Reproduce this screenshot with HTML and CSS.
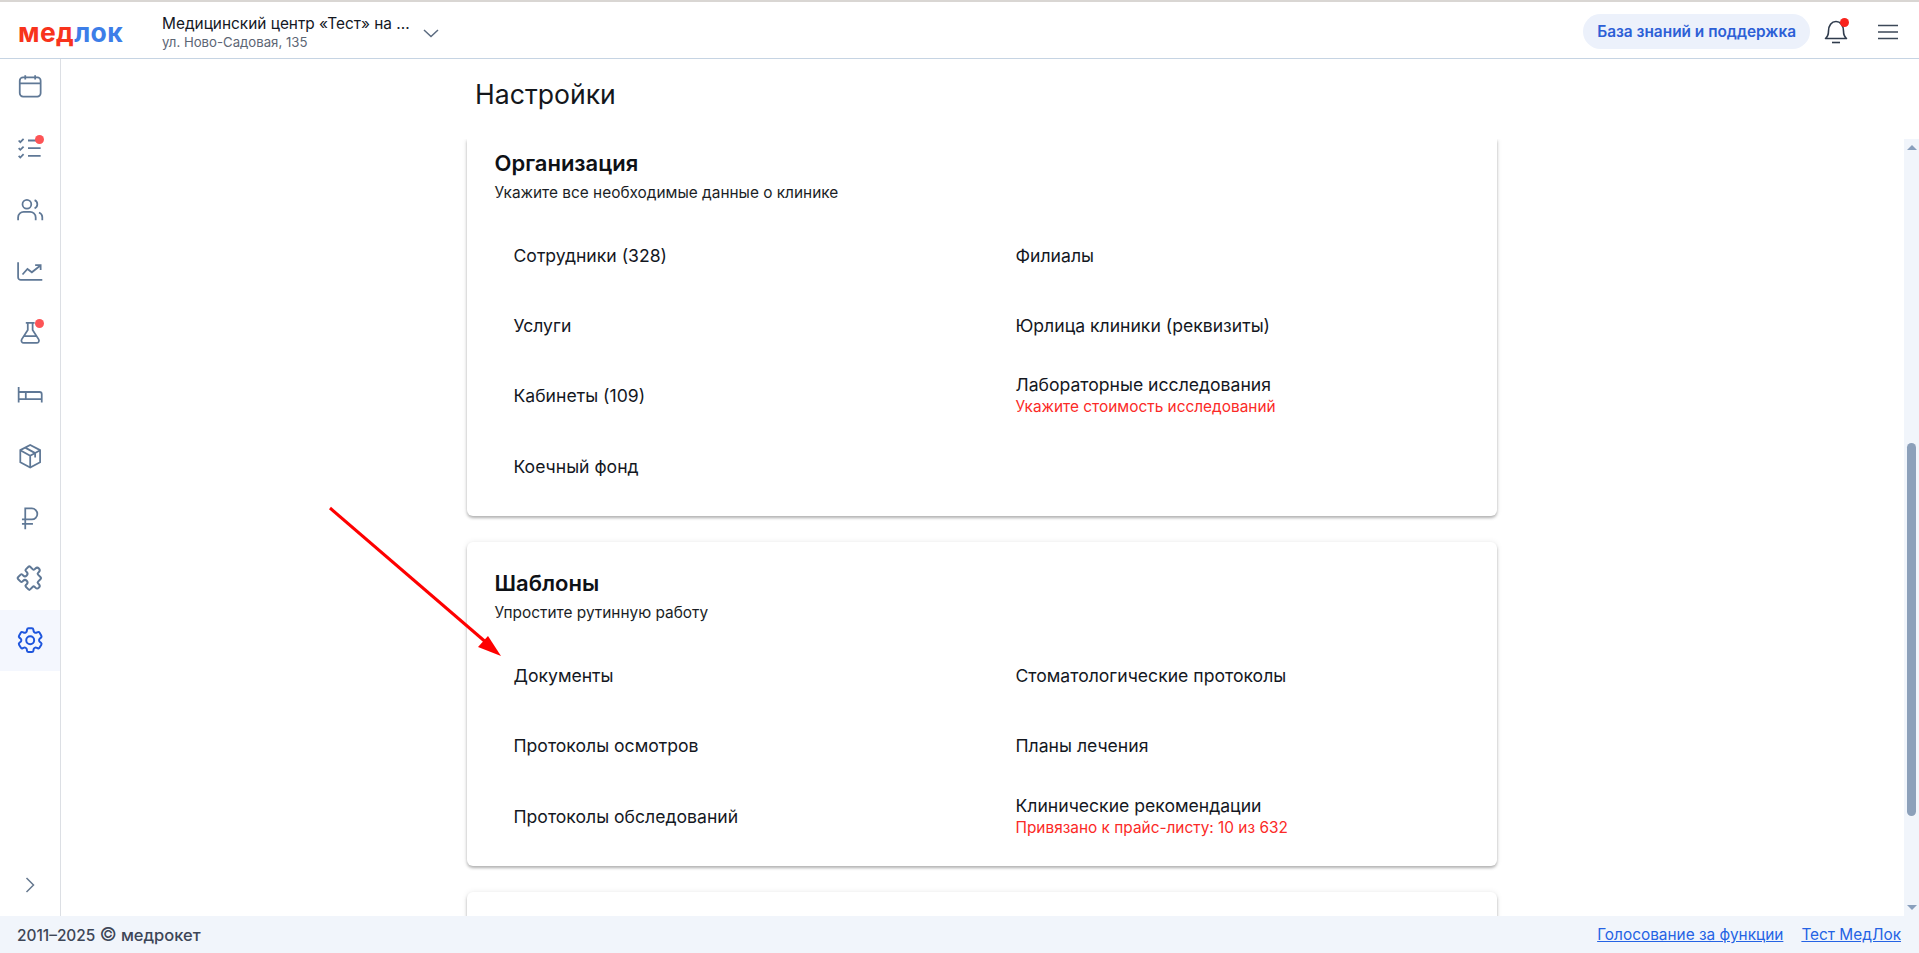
FILE: index.html
```html
<!DOCTYPE html>
<html lang="ru">
<head>
<meta charset="utf-8">
<title>Настройки</title>
<link rel="stylesheet" href="styles.css">
</head>
<body>
<div class="app">
  <header class="topbar">
    <div class="logo"><span class="logo-red">мед</span><span class="logo-blue">лок</span></div>
    <div class="clinic">
      <div class="clinic-text">
        <div class="clinic-name">Медицинский центр «Тест» на ...</div>
        <div class="clinic-addr">ул. Ново-Садовая, 135</div>
      </div>
      <svg class="clinic-chevron" width="18" height="10" viewBox="0 0 18 10"><path d="M2 2l7 6.5L16 2" fill="none" stroke="#5b6b80" stroke-width="1.5"/></svg>
    </div>
    <div class="top-actions">
      <a class="help-pill">База знаний и поддержка</a>
      <span class="bell">
        <svg width="24" height="28" viewBox="0 0 24 28"><path d="M1.500 20.500c2.200-1.800 3-3.600 3-7.500 0-5.500 3-9.500 7.500-9.500s7.500 4 7.500 9.500c0 3.900.8 5.700 3 7.500z" fill="none" stroke="#2f3b4c" stroke-width="1.600" stroke-linejoin="round"/><path d="M8 24.500h8" stroke="#2f3b4c" stroke-width="1.600"/></svg>
        <i class="bell-dot"></i>
      </span>
      <svg class="burger" width="20" height="16" viewBox="0 0 20 16"><path d="M0 1.500h20M0 8h20M0 14.500h20" stroke="#3c4858" stroke-width="1.700"/></svg>
    </div>
  </header>

  <div class="middle">
    <nav class="sidebar">
      <div class="nav-list">
        <a class="nav-item"><svg class="ico" viewBox="0 0 24 24"><rect x="2.500" y="4" width="19" height="17.500" rx="3"/><path d="M2.500 9.500h19M7.500 2v4M16.500 2v4"/></svg></a>
        <a class="nav-item"><svg class="ico" viewBox="0 0 24 24"><path d="M1.500 5l1.500 1.500L6 3.500M1.500 12l1.500 1.500L6 10.500M1.500 19l1.500 1.500L6 17.500M10 5h11.500M10 12h11.500M10 19h11.500"/></svg><i class="nav-dot"></i></a>
        <a class="nav-item"><svg class="ico" viewBox="0 0 24 24"><circle cx="9" cy="7.500" r="4"/><path d="M1 22v-2.500c0-3 2.500-5 5-5h6c2.500 0 5 2 5 5V22M16 3.800a4 4 0 0 1 0 7.400M20 15c1.800.8 3 2.300 3 4.200V22"/></svg></a>
        <a class="nav-item"><svg class="ico" viewBox="0 0 24 24"><path d="M1 3.800V17.500a2.500 2.500 0 0 0 2.500 2.500H23M5 15l4.500-5 4 3 7.500-6M16.500 6.500h5V11"/></svg></a>
        <a class="nav-item"><svg class="ico" viewBox="0 0 24 24"><path d="M8 3.500h8M9.800 3.500v6.500L4.300 18.500c-.9 1.700.2 3.300 1.900 3.300h11.600c1.700 0 2.800-1.600 1.900-3.300L14.200 10V3.500M6.700 15.500h10.600"/></svg><i class="nav-dot"></i></a>
        <a class="nav-item"><svg class="ico" viewBox="0 0 24 24"><path d="M1.500 5.500v14M1.500 16.500h21v3M22.500 16.500V12a2 2 0 0 0-2-2h-19M8 10v6.500"/></svg></a>
        <a class="nav-item"><svg class="ico" viewBox="0 0 24 24"><path d="M12 1.800l9 4.700v11L12 22.200 3 17.500v-11zM3 6.500l9 5 9-5M12 11.500v10.700M7.500 4.200l9 5v4"/></svg></a>
        <a class="nav-item"><svg class="ico" viewBox="0 0 24 24"><path d="M7.500 23V4h6a5 5 0 0 1 0 10H4.500M4.500 18h10"/></svg></a>
        <a class="nav-item"><svg class="ico" viewBox="0 0 24 24"><g transform="translate(12 11) rotate(45) scale(1.120) translate(-10.500 -13.500)"><path d="M4 7h3a1 1 0 0 0 1-1V5a2 2 0 0 1 4 0v1a1 1 0 0 0 1 1h3a1 1 0 0 1 1 1v3a1 1 0 0 0 1 1h1a2 2 0 0 1 0 4h-1a1 1 0 0 0-1 1v3a1 1 0 0 1-1 1h-3a1 1 0 0 1-1-1v-1a2 2 0 0 0-4 0v1a1 1 0 0 1-1 1H4a1 1 0 0 1-1-1v-3a1 1 0 0 1 1-1h1a2 2 0 0 0 0-4H4a1 1 0 0 1-1-1V8a1 1 0 0 1 1-1"/></g></svg></a>
        <a class="nav-item is-active"><svg class="ico" viewBox="2 2 20 20"><path d="M9.594 3.940c.09-.542.56-.94 1.110-.94h2.593c.55 0 1.020.398 1.110.94l.213 1.281c.063.374.313.686.645.87.074.04.147.083.22.127.325.196.72.257 1.075.124l1.217-.456a1.125 1.125 0 0 1 1.370.49l1.296 2.247a1.125 1.125 0 0 1-.26 1.431l-1.003.827c-.293.241-.438.613-.43.992a7.723 7.723 0 0 1 0 .255c-.008.378.137.75.43.991l1.004.827c.424.35.534.955.26 1.430l-1.298 2.247a1.125 1.125 0 0 1-1.369.491l-1.217-.456c-.355-.133-.75-.072-1.076.124a6.470 6.470 0 0 1-.22.128c-.331.183-.581.495-.644.869l-.213 1.281c-.09.543-.56.94-1.110.94h-2.594c-.55 0-1.019-.398-1.110-.94l-.213-1.281c-.062-.374-.312-.686-.644-.87a6.520 6.520 0 0 1-.22-.127c-.325-.196-.72-.257-1.076-.124l-1.217.456a1.125 1.125 0 0 1-1.369-.49l-1.297-2.247a1.125 1.125 0 0 1 .26-1.431l1.004-.827c.292-.24.437-.613.43-.991a6.932 6.932 0 0 1 0-.255c.007-.38-.138-.751-.43-.992l-1.004-.827a1.125 1.125 0 0 1-.26-1.430l1.297-2.247a1.125 1.125 0 0 1 1.370-.491l1.216.456c.356.133.751.072 1.076-.124.072-.044.146-.086.22-.128.332-.183.582-.495.644-.869l.214-1.280Z"/><circle cx="12" cy="12" r="3"/></svg></a>
      </div>
      <a class="nav-item nav-expand"><svg width="12" height="18" viewBox="0 0 12 18"><path d="M2.500 2l7 7-7 7" fill="none" stroke="#66788f" stroke-width="1.500"/></svg></a>
    </nav>

    <main class="content">
      <div class="title-row"><h1 class="page-title">Настройки</h1></div>
      <div class="scroll-row">
        <div class="scroll-area">
          <div class="cards">
            <section class="card card-cut">
              <h2 class="card-title">Организация</h2>
              <p class="card-sub">Укажите все необходимые данные о клинике</p>
              <div class="links">
                <a class="link"><span>Сотрудники (328)</span></a>
                <a class="link"><span>Филиалы</span></a>
                <a class="link"><span>Услуги</span></a>
                <a class="link"><span>Юрлица клиники (реквизиты)</span></a>
                <a class="link"><span>Кабинеты (109)</span></a>
                <a class="link"><span>Лабораторные исследования</span><small class="warn">Укажите стоимость исследований</small></a>
                <a class="link"><span>Коечный фонд</span></a>
              </div>
            </section>
            <section class="card">
              <h2 class="card-title">Шаблоны</h2>
              <p class="card-sub">Упростите рутинную работу</p>
              <div class="links">
                <a class="link"><span>Документы</span></a>
                <a class="link"><span>Стоматологические протоколы</span></a>
                <a class="link"><span>Протоколы осмотров</span></a>
                <a class="link"><span>Планы лечения</span></a>
                <a class="link"><span>Протоколы обследований</span></a>
                <a class="link"><span>Клинические рекомендации</span><small class="warn">Привязано к прайс-листу: 10 из 632</small></a>
              </div>
            </section>
            <section class="card card-next"></section>
          </div>
        </div>
        <div class="scrollbar">
          <i class="sb-up"></i>
          <i class="sb-thumb"></i>
          <i class="sb-down"></i>
        </div>
      </div>
    </main>
  </div>

  <footer class="footer">
    <div class="copy">2011–2025 <span class="copy-mark">©</span> <span class="copy-brand">медрокет</span></div>
    <div class="foot-links">
      <a class="foot-link">Голосование за функции</a>
      <a class="foot-link">Тест МедЛок</a>
    </div>
  </footer>

  <svg class="annotation" width="200" height="170" viewBox="0 0 200 170">
    <path d="M10 8L168 144" stroke="#fe0000" stroke-width="3" fill="none"/>
    <path d="M181 156L158 147L168 136z" fill="#fe0000"/>
  </svg>
</div>
</body>
</html>
```
FILE: styles.css
```css
* { box-sizing: border-box; }
html, body { margin: 0; height: 100%; overflow: hidden; }
body { font-family: Inter, "Liberation Sans", sans-serif; color: #111418; background: #fff; }
a { color: inherit; text-decoration: none; }

.app { position: relative; display: flex; flex-direction: column; height: 953px; }

.topbar {
  display: flex; align-items: center; height: 59px; flex: none;
  padding: 3px 21px 0 18px;
  border-top: 2px solid #d9d6d3; border-bottom: 1px solid #c6d4e3;
  background: #fff;
}
.logo { width: 144px; font-weight: 700; font-size: 26.500px; line-height: 30px; letter-spacing: .4px; }
.logo-red { color: #f8331c; }
.logo-blue { color: #3d7ee8; }
.clinic { display: flex; align-items: center; gap: 12px; }
.clinic-name { font-size: 15.400px; line-height: 21px; color: #14181f; }
.clinic-addr { font-size: 13.200px; line-height: 17px; color: #5d6675; }
.clinic-chevron { margin-top: 2px; }
.top-actions { margin-left: auto; display: flex; align-items: center; }
.help-pill {
  display: flex; align-items: center; height: 35px; padding: 0 14px;
  border-radius: 18px; background: #ecf1fb; color: #2d5fd6;
  font-weight: 600; font-size: 15.400px;
}
.bell { position: relative; display: flex; margin-left: 14px; }
.bell-dot { position: absolute; top: 0; right: -1px; width: 9px; height: 9px; border-radius: 50%; background: #f8231c; }
.burger { margin-left: 30px; }

.middle { flex: 1; display: flex; min-height: 0; }
.sidebar {
  flex: none; width: 61px; display: flex; flex-direction: column; overflow: hidden;
  border-right: 1px solid #dcdfe4; background: #fff;
}
.nav-list { margin-top: -3.600px; }
.nav-item { position: relative; display: flex; align-items: center; justify-content: center; height: 61.600px; }
.nav-item.is-active { background: #f4f7fe; }
.nav-expand { margin-top: auto; }
.ico { width: 26.400px; height: 26.400px; fill: none; stroke: #5f7896; stroke-width: 1.600; overflow: visible; }
.is-active .ico { stroke: #1f56dd; stroke-width: 1.500; }
.nav-dot { position: absolute; top: 17.500px; left: 34.500px; width: 9px; height: 9px; border-radius: 50%; background: #fd5456; }

.content { flex: 1; min-width: 0; display: flex; flex-direction: column; }
.title-row { flex: none; height: 80px; width: 1030px; margin: 0 auto; padding: 0 8px 10px; transform: translateX(-8px); display: flex; align-items: center; }
.page-title { margin: 0; font-size: 26.600px; font-weight: 400; color: #14171c; }
.scroll-row { flex: 1; display: flex; min-height: 0; }
.scroll-area { flex: 1; min-width: 0; overflow: hidden; padding-right: 2px; }
.cards { width: 1030px; margin: 0 auto; display: flex; flex-direction: column; gap: 26.400px; }
.card { flex: none; padding: 25px 28px 14px; background: #fff; border-radius: 6px; box-shadow: 0 2px 3px rgba(0,0,0,.28), 0 0 6px rgba(0,0,0,.08); }
.card-cut { padding-top: 8px; border-radius: 0 0 6px 6px; }
.card-next { height: 60px; }
.card-title { margin: 0; font-size: 22px; line-height: 32px; font-weight: 600; color: #0e1116; }
.card-sub { margin: 3px 0 0; font-size: 15.400px; line-height: 22px; color: #1a1e25; }
.links { display: grid; grid-template-columns: 502px 1fr; margin-top: 17px; padding-left: 19px; }
.link { display: flex; flex-direction: column; justify-content: center; height: 70.200px; font-size: 17.600px; line-height: 24px; color: #14181f; }
.warn { font-size: 15.400px; line-height: 19px; padding-bottom: 3px; color: #fb2a27; }

.scrollbar { flex: none; width: 15px; display: flex; flex-direction: column; align-items: center; background: #f1f5fb; }
.sb-up { margin-top: 6px; border: 5px solid transparent; border-top: 0; border-bottom: 5px solid #8aa0bd; }
.sb-thumb { width: 9px; height: 373px; margin-top: 293px; border-radius: 5px; background: #8ca0ba; }
.sb-down { margin-top: auto; margin-bottom: 6px; border: 5px solid transparent; border-bottom: 0; border-top: 5px solid #8aa0bd; }

.footer {
  flex: none; height: 37px; display: flex; align-items: center; justify-content: space-between;
  padding: 0 18px 0 17px; background: #f1f5fb;
}
.copy { font-size: 15.400px; font-weight: 500; color: #3d4657; }
.copy-mark { font-size: 19px; font-weight: 400; line-height: 1; }
.copy-brand { font-size: 16.500px; font-weight: 500; }
.foot-links { display: flex; gap: 18px; }
.foot-link { font-size: 15.400px; color: #2563e4; text-decoration: underline; }

.annotation { position: absolute; left: 320px; top: 500px; pointer-events: none; }
```
